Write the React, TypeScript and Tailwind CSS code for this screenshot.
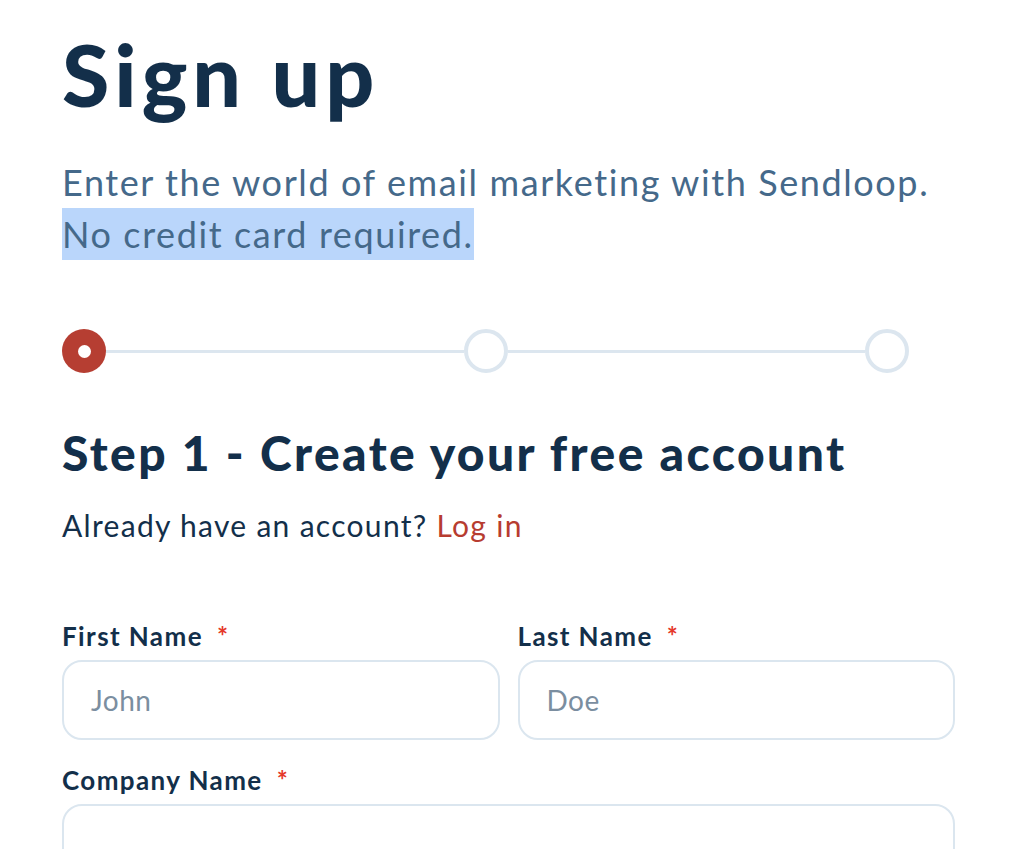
import React from "react";

const font = { fontFamily: "Lato, 'Noto Sans', sans-serif" };

function Field({ label, placeholder }: { label: string; placeholder?: string }) {
  return (
    <div className="flex flex-col">
      <label className="text-[26px] font-bold leading-[36px] tracking-[1.4px] text-[#132f4a]">
        {label}
        <span className="ml-[14px] text-[#e5382a]">*</span>
      </label>
      <div className="mt-[6px] flex h-[80px] items-center rounded-[20px] border-2 border-[#dbe6ef] bg-white px-[27px]">
        <span className="text-[28px] tracking-[0.5px] text-[#7b8ea0]">{placeholder}</span>
      </div>
    </div>
  );
}

export default function App() {
  return (
    <div className="min-h-[849px] w-[1024px] overflow-hidden bg-white" style={font}>
      <div className="pl-[62px] pr-[69px] pt-[24px]">
        <h1 className="text-[86px] font-black leading-[100px] tracking-[5px] text-[#132f4a]">Sign up</h1>
        <p className="mt-[32px] text-[36px] leading-[52px] tracking-[1.6px] text-[#45698a]">
          Enter the world of email marketing with Sendloop.
          <br />
          <span className="inline-block w-[412px] whitespace-nowrap bg-[#bad6fb]">No credit card required.</span>
        </p>

        <div className="mt-[69px] flex items-center pr-[46px]">
          <div className="flex h-[44px] w-[44px] shrink-0 items-center justify-center rounded-full bg-[#b63e32]">
            <div className="h-[13px] w-[13px] rounded-full bg-white" />
          </div>
          <div className="h-[3px] flex-1 bg-[#dce6ef]" />
          <div className="h-[44px] w-[44px] shrink-0 rounded-full border-[4px] border-[#dce6ef]" />
          <div className="h-[3px] flex-1 bg-[#dce6ef]" />
          <div className="h-[44px] w-[44px] shrink-0 rounded-full border-[4px] border-[#dce6ef]" />
        </div>

        <h2 className="mt-[50px] text-[48px] font-black leading-[60px] tracking-[2.4px] text-[#132f4a]">
          Step 1 - Create your free account
        </h2>
        <p className="mt-[20px] text-[30px] leading-[44px] tracking-[1.3px] text-[#132f4a]">
          Already have an account? <span className="text-[#b73c30]">Log in</span>
        </p>

        <div className="mt-[71px] grid grid-cols-2 gap-x-[18px]">
          <Field label="First Name" placeholder="John" />
          <Field label="Last Name" placeholder="Doe" />
        </div>
        <div className="mt-[22px]">
          <Field label="Company Name" />
        </div>
      </div>
    </div>
  );
}
